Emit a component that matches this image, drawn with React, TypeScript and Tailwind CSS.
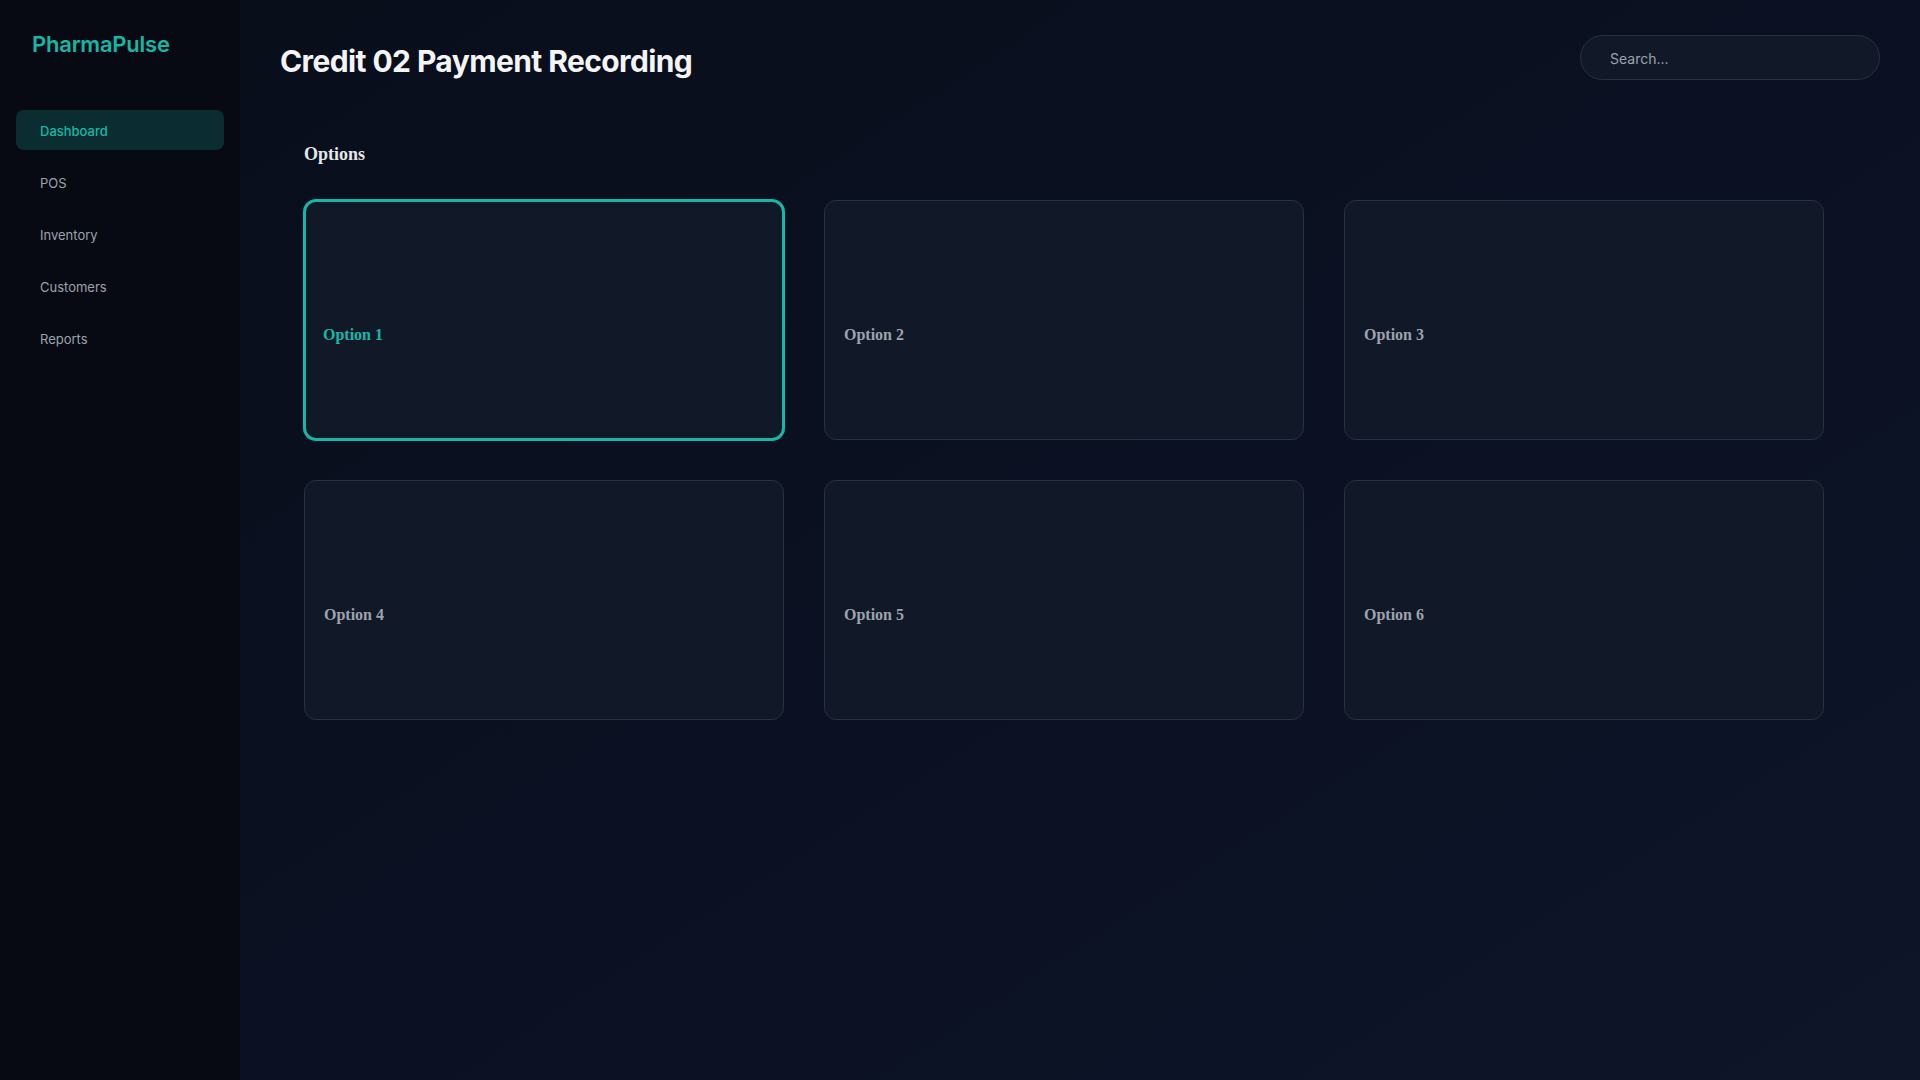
import React from "react";

const navItems = ["Dashboard", "POS", "Inventory", "Customers", "Reports"];
const options = ["Option 1", "Option 2", "Option 3", "Option 4", "Option 5", "Option 6"];

export default function App() {
  return (
    <div className="flex w-full h-[1080px] overflow-hidden font-['Inter','Noto_Sans',sans-serif] bg-[#0a0f1c]">
      <aside className="w-[240px] shrink-0 h-full bg-[#070a12] p-4 flex flex-col">
        <div className="h-[56px] flex items-center px-4">
          <span className="text-[22px] font-semibold text-[#14b8a6] tracking-[-0.01em]">PharmaPulse</span>
        </div>
        <nav className="mt-[38px] flex flex-col gap-3">
          {navItems.map((item, i) => (
            <div
              key={item}
              className={
                i === 0
                  ? "h-10 rounded-lg px-6 pt-1 flex items-center bg-[#0b2d32] text-[#14b8a6] text-[13px] font-medium"
                  : "h-10 rounded-lg px-6 pt-1 flex items-center text-[#9ca3af] text-[13px]"
              }
            >
              {item}
            </div>
          ))}
        </nav>
      </aside>
      <main className="flex-1 h-full bg-linear-to-br from-[#090e1b] via-[#0b1122] to-[#0e1529] px-10">
        <header className="pt-[35px] flex items-center justify-between">
          <h1 className="mt-[6px] text-[30px] leading-9 font-bold tracking-[-0.02em] text-[#f3f4f6]">
            Credit 02 Payment Recording
          </h1>
          <div className="w-[300px] h-[45px] rounded-full border border-[#283242] bg-[#111827] flex items-center pl-[29px] pt-[2px] text-sm text-[#9ca3af]">
            Search...
          </div>
        </header>
        <section className="px-6 mt-[60px]">
          <h2 className="font-['Liberation_Serif','Times_New_Roman',serif] font-bold text-[18px] leading-7 text-[#e5e7eb]">
            Options
          </h2>
          <div className="mt-[32px] grid grid-cols-[repeat(3,480px)] gap-10">
            {options.map((opt, i) => (
              <div
                key={opt}
                className={
                  i === 0
                    ? "h-[240px] rounded-xl border-2 border-[#14b8a6] shadow-[0_0_0_1px_#14b8a6] bg-[#111827] flex items-center pl-[17px] pt-[30px]"
                    : "h-[240px] rounded-xl border border-[#273142] bg-[#111827] flex items-center pl-[19px] pt-[30px]"
                }
              >
                <span
                  className={
                    i === 0
                      ? "font-['Liberation_Serif','Times_New_Roman',serif] font-bold text-base text-[#14b8a6]"
                      : "font-['Liberation_Serif','Times_New_Roman',serif] font-bold text-base text-[#9ca3af]"
                  }
                >
                  {opt}
                </span>
              </div>
            ))}
          </div>
        </section>
      </main>
    </div>
  );
}
